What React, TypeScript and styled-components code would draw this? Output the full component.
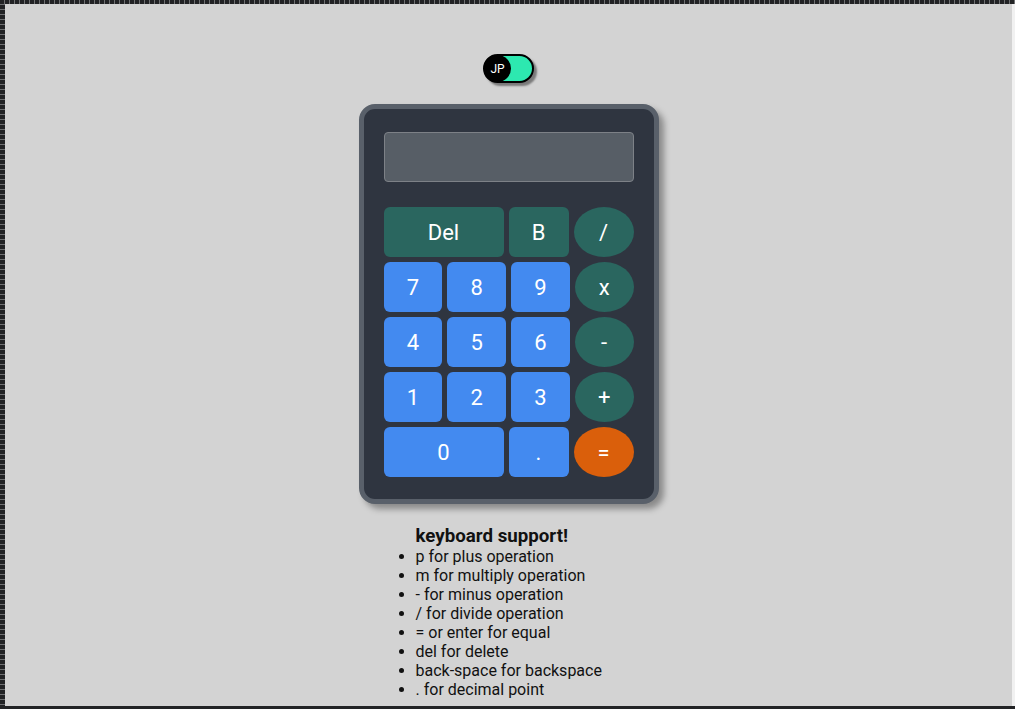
import React from "react";
import styled, { createGlobalStyle } from "styled-components";

const Global = createGlobalStyle`
  html, body { margin: 0; padding: 0; }
  body { background: #d3d3d3; font-family: Roboto, "Liberation Sans", Arial, sans-serif; }
  * { box-sizing: border-box; }
`;

const Page = styled.div`
  min-height: 709px;
  padding: 4px 3px 3px 5px;
  background-color: #d3d3d3;
  background-image:
    repeating-linear-gradient(90deg, #222325 0 4px, #6f7072 4px 5px),
    repeating-linear-gradient(180deg, #222325 0 4px, #6f7072 4px 5px),
    linear-gradient(#222325, #222325),
    linear-gradient(#f1f1f1, #f1f1f1);
  background-size: 100% 4px, 5px 100%, 100% 3px, 3px 100%;
  background-position: top left, top left, bottom left, top right;
  background-repeat: no-repeat;
  display: flex;
  flex-direction: column;
  align-items: center;
`;

const Switch = styled.div`
  margin-top: 50px;
  width: 51px;
  height: 29px;
  border-radius: 15px;
  border: 2px solid #000;
  background: #2de8b0;
  box-shadow: 3px 3px 2px #7a7a7a;
  display: flex;
  align-items: center;
`;

const Knob = styled.span`
  width: 27px;
  height: 27px;
  margin-left: -1px;
  border-radius: 50%;
  background: #000;
  color: #fff;
  font-size: 12px;
  display: flex;
  align-items: center;
  justify-content: center;
`;

const Calc = styled.div`
  margin-top: 21px;
  width: 300px;
  border: 5px solid #59606a;
  border-radius: 16px;
  background: #2f3540;
  padding: 23px 20px 22px;
  box-shadow: 5px 5px 6px rgba(0, 0, 0, 0.35);
  display: flex;
  flex-direction: column;
`;

const Display = styled.div`
  height: 50px;
  background: #575e66;
  border: 1px solid #7d8187;
  border-radius: 4px;
  margin-bottom: 25px;
`;

const Keys = styled.div`
  display: flex;
  flex-direction: column;
  gap: 5px;
`;

const Row = styled.div`
  display: flex;
  gap: 5px;
`;

type Kind = "num" | "fn" | "op" | "eq";
const bg: Record<Kind, string> = {
  num: "#438af0",
  fn: "#2a665f",
  op: "#2a665f",
  eq: "#da5f0b",
};

const Key = styled.button<{ $kind: Kind; $w?: number }>`
  height: 50px;
  ${(p) => (p.$w ? `width: ${p.$w}px; flex: none;` : "flex: 1;")}
  border: none;
  border-radius: ${(p) => (p.$kind === "op" || p.$kind === "eq" ? "50%" : "6px")};
  background: ${(p) => bg[p.$kind]};
  color: #fff;
  font-family: Roboto, "Liberation Sans", Arial, sans-serif;
  font-size: 22px;
  padding: 0;
  display: flex;
  align-items: center;
  justify-content: center;
`;

const Help = styled.div`
  margin-top: 21px;
  width: 266px;
  color: #111;
`;

const Title = styled.div`
  padding-left: 40px;
  font-weight: 700;
  font-size: 18.72px;
  line-height: 22px;
`;

const List = styled.ul`
  margin: 0;
  padding-left: 40px;
  font-size: 16px;
  line-height: 19px;
`;

const items = [
  "p for plus operation",
  "m for multiply operation",
  "- for minus operation",
  "/ for divide operation",
  "= or enter for equal",
  "del for delete",
  "back-space for backspace",
  ". for decimal point",
];

export default function App() {
  return (
    <>
      <Global />
      <Page>
        <Switch>
          <Knob>JP</Knob>
        </Switch>
        <Calc>
          <Display />
          <Keys>
            <Row>
              <Key $kind="fn" $w={120}>Del</Key>
              <Key $kind="fn" $w={60}>B</Key>
              <Key $kind="op" $w={60}>/</Key>
            </Row>
            <Row>
              <Key $kind="num">7</Key>
              <Key $kind="num">8</Key>
              <Key $kind="num">9</Key>
              <Key $kind="op">x</Key>
            </Row>
            <Row>
              <Key $kind="num">4</Key>
              <Key $kind="num">5</Key>
              <Key $kind="num">6</Key>
              <Key $kind="op">-</Key>
            </Row>
            <Row>
              <Key $kind="num">1</Key>
              <Key $kind="num">2</Key>
              <Key $kind="num">3</Key>
              <Key $kind="op">+</Key>
            </Row>
            <Row>
              <Key $kind="num" $w={120}>0</Key>
              <Key $kind="num" $w={60}>.</Key>
              <Key $kind="eq" $w={60}>=</Key>
            </Row>
          </Keys>
        </Calc>
        <Help>
          <Title>keyboard support!</Title>
          <List>
            {items.map((t) => (
              <li key={t}>{t}</li>
            ))}
          </List>
        </Help>
      </Page>
    </>
  );
}
